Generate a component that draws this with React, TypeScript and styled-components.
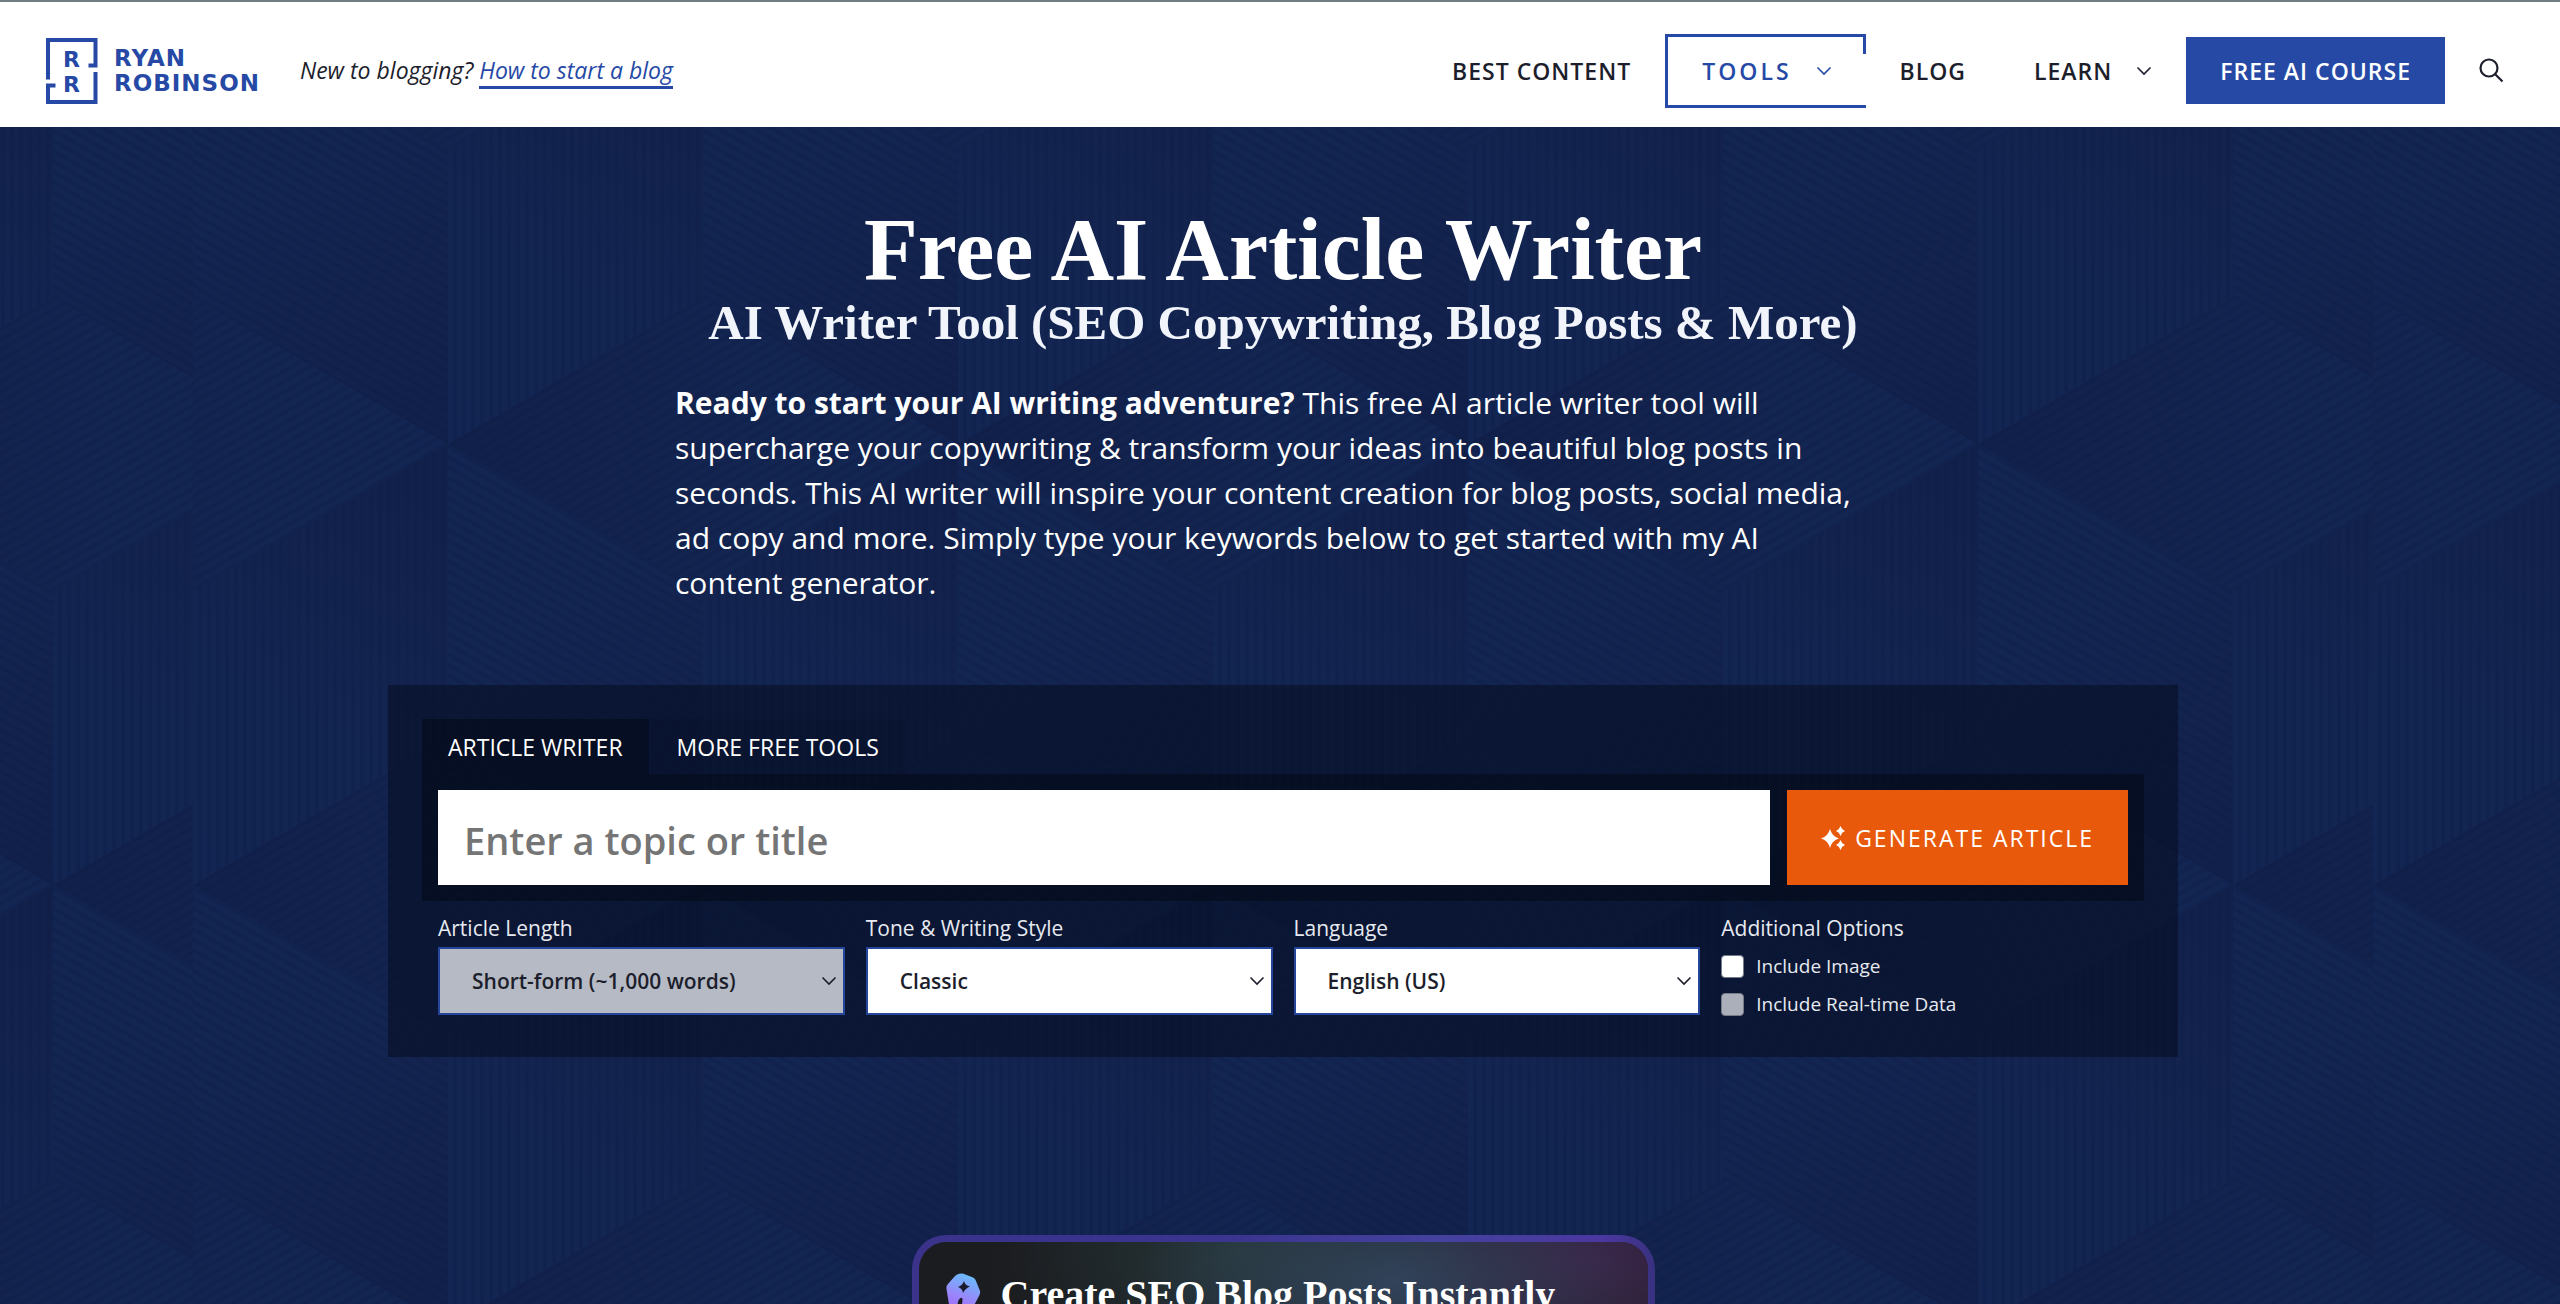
import React from "react";
import styled, { createGlobalStyle, css } from "styled-components";

const sans = `"Open Sans", "Noto Sans", sans-serif`;
const serif = `"Liberation Serif", Georgia, serif`;
const blue = "#2649a6";
const ink = "#1d1e2c";

/* Tumbling-block pattern: three hatched rhombi around every star vertex. */
const hatch = (id: string, angle: number) =>
  `<pattern id='${id}' width='9' height='9' patternUnits='userSpaceOnUse' patternTransform='rotate(${angle})'><rect width='9' height='4' fill='#0d1a42' opacity='.5'/></pattern>`;
const grad = (id: string, x1: number, y1: number, x2: number, y2: number) =>
  `<linearGradient id='${id}' gradientUnits='userSpaceOnUse' x1='${x1}' y1='${y1}' x2='${x2}' y2='${y2}'><stop offset='0' stop-color='#132552'/><stop offset='.4' stop-color='#132551'/><stop offset='1' stop-color='#11204a'/></linearGradient>`;
const star = (x: number, y: number) =>
  `<g transform='translate(${x} ${y})'>` +
  [
    ["M0 0L255 -147L510 0L255 147Z", "a", "ha"],
    ["M0 0L255 147L255 441L0 294Z", "b", "hb"],
    ["M0 0L0 -294L255 -441L255 -147Z", "c", "hc"],
  ]
    .map(([d, g, h]) => `<path d='${d}' fill='url(#${g})'/><path d='${d}' fill='url(#${h})' opacity='.45'/>`)
    .join("") +
  `</g>`;
const stars: string[] = [];
for (let col = -2; col <= 9; col++) {
  for (let row = -1; row <= 2; row++) {
    stars.push(star(col * 255, row * 882 + (col % 2 === 0 ? 0 : 441)));
  }
}
const backdrop = encodeURIComponent(
  `<svg xmlns='http://www.w3.org/2000/svg' width='2180' height='882' viewBox='0 0 2180 882'><defs>` +
    grad("a", 510, 0, 0, 0) +
    grad("b", 0, 0, 255, 441) +
    grad("c", 0, 0, 255, -441) +
    hatch("ha", -30) +
    hatch("hb", 30) +
    hatch("hc", 90) +
    `</defs><rect width='2180' height='882' fill='#122350'/>${stars.join("")}</svg>`
);

const GlobalStyle = createGlobalStyle`
  *, *::before, *::after { box-sizing: border-box; }
  body { margin: 0; font-family: ${sans}; color: ${ink}; background: #122350; }
  h1, h2, h3, p { margin: 0; }
`;

const Page = styled.div`
  display: flex;
  flex-direction: column;
  height: 100vh;
  overflow: hidden;
`;

const Header = styled.header`
  display: flex;
  align-items: center;
  flex: none;
  height: 127px;
  padding: 12px 56px 0 46px;
  border-top: 2px solid #6d7d80;
  background: #fff;
`;

const Brand = styled.a`
  display: flex;
  align-items: center;
  gap: 16px;
  color: ${blue};
  text-decoration: none;
`;

const BrandName = styled.span`
  font: bold 23px/25px "DejaVu Sans", sans-serif;
  letter-spacing: 1px;
`;

const Tagline = styled.p`
  margin: 2px 0 0 40px;
  font-size: 23px;
  line-height: 32px;
  font-style: italic;
`;

const TaglineLink = styled.a`
  display: inline-block;
  color: ${blue};
  text-decoration: none;
  border-bottom: 3px solid ${blue};
`;

const Nav = styled.nav`
  display: flex;
  align-items: center;
  margin-left: auto;
`;

const NavLink = styled.a<{ $active?: boolean; $filled?: boolean }>`
  position: relative;
  display: flex;
  align-items: center;
  gap: 24px;
  height: ${(p) => (p.$filled ? 67 : 74)}px;
  padding: 0 34px;
  color: ${ink};
  font-size: 23px;
  font-weight: 600;
  letter-spacing: 1px;
  text-decoration: none;
  ${(p) =>
    p.$active &&
    css`
      color: ${blue};
      letter-spacing: 3px;
      border: 3px solid ${blue};
      border-right-width: 0;
      &::after {
        content: "";
        position: absolute;
        top: 0;
        right: 0;
        width: 3px;
        height: 17px;
        background: ${blue};
      }
    `}
  ${(p) =>
    p.$filled &&
    css`
      color: #fff;
      background: ${blue};
    `}
`;

const SearchButton = styled.button`
  display: flex;
  margin-left: 34px;
  padding: 0;
  border: 0;
  background: none;
  color: ${ink};
`;

const Hero = styled.main`
  display: flex;
  flex-direction: column;
  align-items: center;
  flex: 1;
  min-height: 0;
  padding: 78px 24px 0 30px;
  background: #122350 url("data:image/svg+xml,${backdrop}") calc(50% + 3px) -124px;
  color: #fff;
`;

const Title = styled.h1`
  font: bold 88px/90px ${serif};
`;

const Subtitle = styled.h2`
  font: bold 49px/56px ${serif};
  color: #f1f4fb;
`;

const Intro = styled.p`
  width: 100%;
  max-width: 1216px;
  margin-top: 29px;
  padding-right: 20px;
  font-size: 30px;
  line-height: 45px;
`;

const Panel = styled.form`
  width: 100%;
  max-width: 1790px;
  margin-top: 80px;
  padding: 34px;
  background: rgba(4, 12, 28, 0.52);
`;

const Tabs = styled.div`
  display: flex;
  gap: 2px;
`;

const Tab = styled.button<{ $active?: boolean }>`
  height: 55px;
  padding: 0 26px;
  border: 0;
  background: ${(p) => (p.$active ? "rgba(3, 9, 22, 0.55)" : "rgba(10, 16, 44, 0.3)")};
  color: #fff;
  font: 400 23px/30px ${sans};
`;

const PromptBar = styled.div`
  display: flex;
  gap: 17px;
  padding: 16px;
  background: rgba(3, 9, 22, 0.55);
`;

const PromptInput = styled.input`
  flex: 1;
  min-width: 0;
  height: 95px;
  padding: 4px 26px 0;
  border: 0;
  border-radius: 0;
  background: #fff;
  color: ${ink};
  font: 600 38px/54px ${sans};
  &::placeholder {
    color: #757575;
    opacity: 1;
  }
`;

const GenerateButton = styled.button`
  display: flex;
  align-items: center;
  gap: 10px;
  padding: 0 34px;
  border: 0;
  background: #e9590c;
  color: #fff;
  font: 400 23px/30px ${sans};
  letter-spacing: 2px;
`;

const Options = styled.div`
  display: grid;
  grid-template-columns: repeat(4, 1fr);
  gap: 21px;
  padding: 11px 16px 0;
`;

const Field = styled.div`
  display: flex;
  flex-direction: column;
  color: #e6e9f0;
  font-size: 21px;
  line-height: 32px;
`;

const FieldLabel = styled.label`
  margin-bottom: 3px;
`;

const SelectWrap = styled.div`
  display: grid;
  align-items: center;
  color: ${ink};
  > * {
    grid-area: 1 / 1;
  }
  > svg {
    justify-self: end;
    margin-right: 8px;
    pointer-events: none;
  }
`;

const Select = styled.select`
  appearance: none;
  width: 100%;
  height: 68px;
  padding: 0 32px;
  border: 2px solid #26469b;
  border-radius: 0;
  background: #fff;
  color: ${ink};
  font: 600 21px/30px ${sans};
  &:disabled {
    background: #b5bac5;
    opacity: 1;
  }
`;

const CheckRow = styled.label`
  display: flex;
  align-items: center;
  gap: 12px;
  height: 38px;
  font-size: 19px;
`;

const Checkbox = styled.input`
  appearance: none;
  width: 23px;
  height: 23px;
  margin: 0;
  border: 1px solid #767b88;
  border-radius: 4px;
  background: #fff;
  &:disabled {
    background: #abafba;
  }
`;

const Promo = styled.section`
  display: flex;
  flex: none;
  gap: 20px;
  width: 100%;
  max-width: 743px;
  min-height: 240px;
  margin-top: 178px;
  padding: 31px 27px;
  border: 7px solid transparent;
  border-radius: 34px;
  background:
    radial-gradient(ellipse 260px 120px at 65% 40px, rgba(52, 72, 98, 0.85), transparent) padding-box,
    radial-gradient(ellipse 240px 140px at 44% 10px, rgba(42, 66, 66, 0.65), transparent) padding-box,
    radial-gradient(ellipse 220px 110px at 92% 16px, rgba(62, 36, 76, 0.85), transparent) padding-box,
    linear-gradient(90deg, #1b1c1f 0%, #1d1f25 60%, #25202e 100%) padding-box,
    linear-gradient(90deg, #3a328b 0%, #3b3590 45%, #44429f 70%, #4b37a0 93%, #38317f 100%) border-box;
`;

const PromoTitle = styled.h3`
  font: bold 40px/44px ${serif};
`;

const Chevron = () => (
  <svg width="16" height="16" viewBox="0 0 16 16" fill="none" stroke="currentColor" strokeWidth="1.600" aria-hidden>
    <path d="M1.500 4.500 8 11 14.500 4.500" />
  </svg>
);

const BrandMark = () => (
  <svg width="52" height="66" viewBox="0 0 52 66" fill="none" stroke={blue} strokeWidth="4" aria-hidden>
    <path d="M2 41.500V2H49.500V27.500H42.500" />
    <path d="M49.500 34V64H2V47.500H9.500" />
    <text x="17" y="28.500" fill={blue} stroke="none" fontFamily="DejaVu Sans, sans-serif" fontWeight="700" fontSize="22">R</text>
    <text x="17" y="54" fill={blue} stroke="none" fontFamily="DejaVu Sans, sans-serif" fontWeight="700" fontSize="22">R</text>
  </svg>
);

const SearchIcon = () => (
  <svg width="25" height="25" viewBox="0 0 25 25" fill="none" stroke="currentColor" strokeWidth="2.200" aria-hidden>
    <circle cx="10" cy="10" r="8.500" />
    <path d="M16 16 23.500 23.500" />
  </svg>
);

const Sparkles = () => (
  <svg width="24" height="24" viewBox="0 0 24 24" fill="currentColor" aria-hidden>
    <path d="M9 3Q11 10.500 18 12.500Q11 14.500 9 22Q7 14.500 0 12.500Q7 10.500 9 3Z" />
    <path d="M19.500 0Q20.700 3.800 24 5Q20.700 6.200 19.500 10Q18.300 6.200 15 5Q18.300 3.800 19.500 0Z" />
    <path d="M19.500 14Q20.700 17.800 24 19Q20.700 20.200 19.500 24Q18.300 20.200 15 19Q18.300 17.800 19.500 14Z" />
  </svg>
);

const PenNib = () => (
  <svg width="35" height="44" viewBox="0 0 35 44" aria-hidden>
    <defs>
      <linearGradient id="nib" x1="0.600" y1="0" x2="0.300" y2="1">
        <stop offset="0" stopColor="#68bdfb" />
        <stop offset="0.550" stopColor="#9a85fa" />
        <stop offset="1" stopColor="#a066f5" />
      </linearGradient>
    </defs>
    <path
      d="M13 .800Q15.500 0 17.500 .800L27 4.500Q29 5.500 29.800 7.500L34 18Q34.500 20 33.500 22L22 44H14.500L16.500 27Q16.800 24 14.500 25Q12.500 26 12 29L9 44H5L.500 16Q0 13.500 1.500 11.500L9 3Q10.500 1.500 13 .800Z"
      fill="url(#nib)"
    />
    <path d="M18 8Q19 12.500 24 13.500Q19.500 15 17 20Q16.500 15.500 12 14Q16.500 12.500 18 8Z" fill="#1b1c2b" />
  </svg>
);

const selects = [
  { id: "length", label: "Article Length", value: "Short-form (~1,000 words)", disabled: true },
  { id: "tone", label: "Tone & Writing Style", value: "Classic" },
  { id: "language", label: "Language", value: "English (US)" },
];

export default function App() {
  return (
    <Page>
      <GlobalStyle />
      <Header>
        <Brand href="#" aria-label="Ryan Robinson">
          <BrandMark />
          <BrandName>
            RYAN
            <br />
            ROBINSON
          </BrandName>
        </Brand>
        <Tagline>
          New to blogging? <TaglineLink href="#">How to start a blog</TaglineLink>
        </Tagline>
        <Nav>
          <NavLink href="#">BEST CONTENT</NavLink>
          <NavLink href="#" $active>
            TOOLS <Chevron />
          </NavLink>
          <NavLink href="#">BLOG</NavLink>
          <NavLink href="#">
            LEARN <Chevron />
          </NavLink>
          <NavLink href="#" $filled>
            FREE AI COURSE
          </NavLink>
          <SearchButton type="button" aria-label="Search">
            <SearchIcon />
          </SearchButton>
        </Nav>
      </Header>
      <Hero>
        <Title>Free AI Article Writer</Title>
        <Subtitle>AI Writer Tool (SEO Copywriting, Blog Posts &amp; More)</Subtitle>
        <Intro>
          <strong>Ready to start your AI writing adventure?</strong> This free AI article writer tool will supercharge
          your copywriting &amp; transform your ideas into beautiful blog posts in seconds. This AI writer will inspire
          your content creation for blog posts, social media, ad copy and more. Simply type your keywords below to get
          started with my AI content generator.
        </Intro>
        <Panel onSubmit={(e: React.FormEvent) => e.preventDefault()}>
          <Tabs>
            <Tab type="button" $active>
              ARTICLE WRITER
            </Tab>
            <Tab type="button">MORE FREE TOOLS</Tab>
          </Tabs>
          <PromptBar>
            <PromptInput type="text" aria-label="Topic or title" placeholder="Enter a topic or title" />
            <GenerateButton type="submit">
              <Sparkles />
              GENERATE ARTICLE
            </GenerateButton>
          </PromptBar>
          <Options>
            {selects.map((s) => (
              <Field key={s.id}>
                <FieldLabel htmlFor={s.id}>{s.label}</FieldLabel>
                <SelectWrap>
                  <Select id={s.id} disabled={s.disabled}>
                    <option>{s.value}</option>
                  </Select>
                  <Chevron />
                </SelectWrap>
              </Field>
            ))}
            <Field role="group" aria-labelledby="extra">
              <FieldLabel as="span" id="extra">
                Additional Options
              </FieldLabel>
              <CheckRow>
                <Checkbox type="checkbox" />
                Include Image
              </CheckRow>
              <CheckRow>
                <Checkbox type="checkbox" disabled />
                Include Real-time Data
              </CheckRow>
            </Field>
          </Options>
        </Panel>
        <Promo>
          <PenNib />
          <PromoTitle>Create SEO Blog Posts Instantly</PromoTitle>
        </Promo>
      </Hero>
    </Page>
  );
}
